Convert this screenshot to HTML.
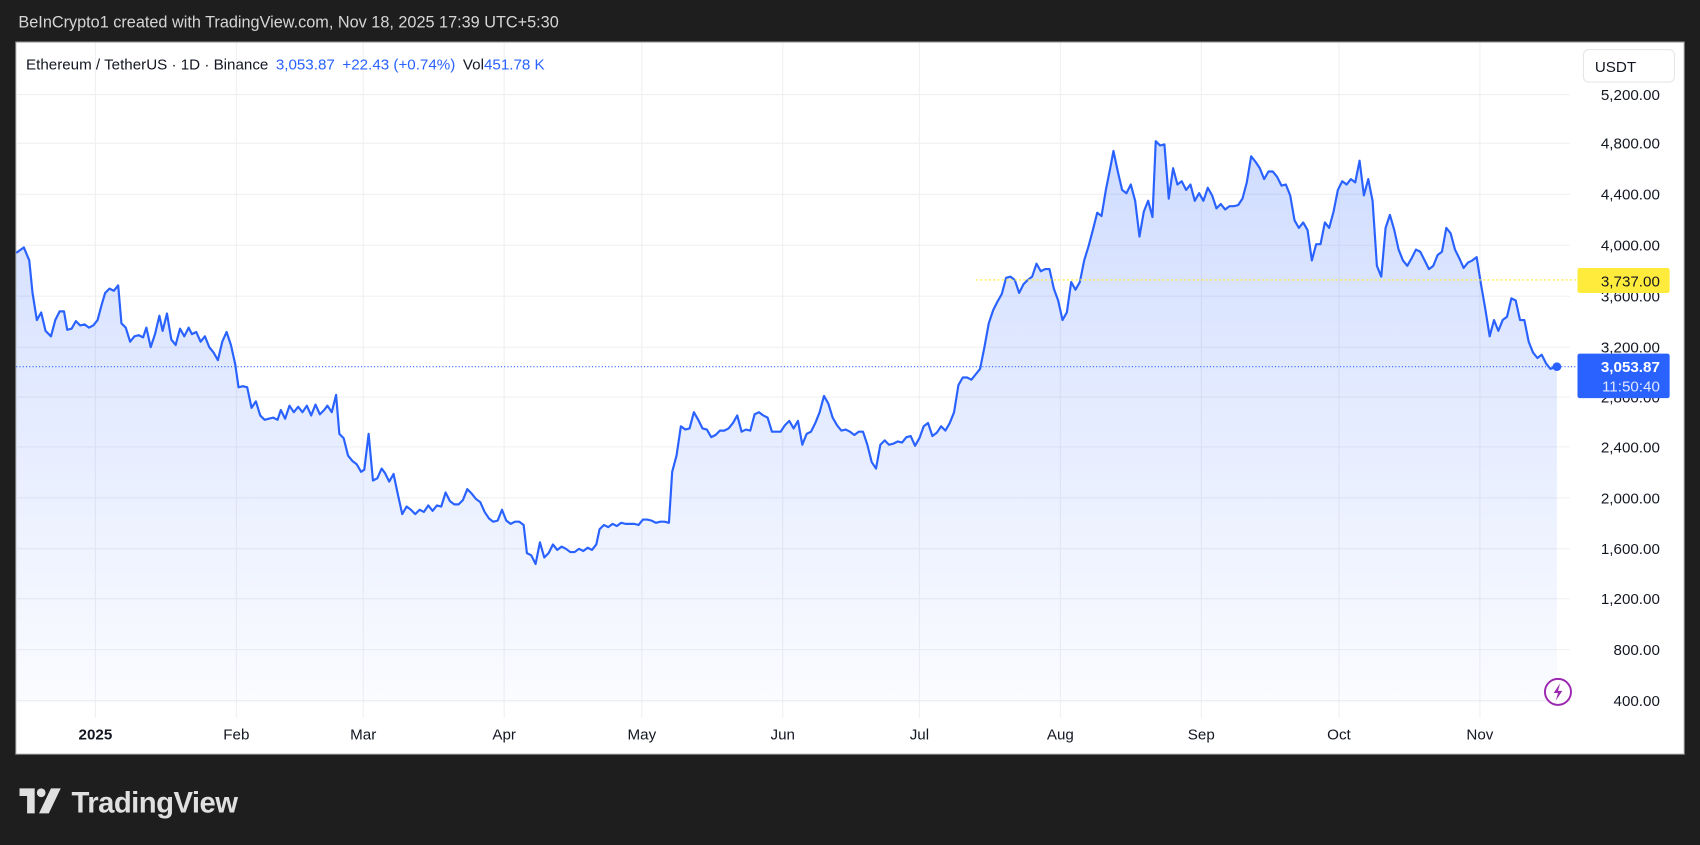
<!DOCTYPE html>
<html><head><meta charset="utf-8"><style>
html,body{margin:0;padding:0;background:#1e1e1e;}
svg{display:block}
</style></head><body>
<svg width="1700" height="845" viewBox="0 0 1568 779" xmlns="http://www.w3.org/2000/svg" font-family="'Liberation Sans', sans-serif">
<defs>
<linearGradient id="g" x1="0" y1="0" x2="0" y2="1">
<stop offset="0" stop-color="#2962ff" stop-opacity="0.22"/>
<stop offset="1" stop-color="#2962ff" stop-opacity="0.02"/>
</linearGradient>
</defs>
<rect width="1568" height="779" fill="#1e1e1e"/>
<text x="17" y="25" font-size="15" fill="#d6d6d6">BeInCrypto1 created with TradingView.com, Nov 18, 2025 17:39 UTC+5:30</text>
<rect x="14.5" y="38.5" width="1539" height="657" fill="#fff" stroke="#888" stroke-width="1"/>
<g stroke="#f0f0f3" stroke-width="1">
<line x1="15" x2="1448" y1="87" y2="87"/><line x1="15" x2="1448" y1="132" y2="132"/><line x1="15" x2="1448" y1="179" y2="179"/><line x1="15" x2="1448" y1="226" y2="226"/><line x1="15" x2="1448" y1="273" y2="273"/><line x1="15" x2="1448" y1="320" y2="320"/><line x1="15" x2="1448" y1="366" y2="366"/><line x1="15" x2="1448" y1="412" y2="412"/><line x1="15" x2="1448" y1="459" y2="459"/><line x1="15" x2="1448" y1="506" y2="506"/><line x1="15" x2="1448" y1="552" y2="552"/><line x1="15" x2="1448" y1="599" y2="599"/><line x1="15" x2="1448" y1="646" y2="646"/>
<line x1="88" x2="88" y1="39" y2="662"/><line x1="218" x2="218" y1="39" y2="662"/><line x1="335" x2="335" y1="39" y2="662"/><line x1="465" x2="465" y1="39" y2="662"/><line x1="592" x2="592" y1="39" y2="662"/><line x1="722" x2="722" y1="39" y2="662"/><line x1="848" x2="848" y1="39" y2="662"/><line x1="978" x2="978" y1="39" y2="662"/><line x1="1108" x2="1108" y1="39" y2="662"/><line x1="1235" x2="1235" y1="39" y2="662"/><line x1="1365" x2="1365" y1="39" y2="662"/>
</g>
<polygon fill="url(#g)" points="15,648 15,233 22,228 27,240 30,270 34,295 38,288 42,305 47,310 51,295 55,287 59,287 62,304 66,303 70,296 74,300 78,299 82,302 86,300 90,295 94,280 97,270 101,266 105,268 109,263 112,298 116,302 120,315 124,310 128,309 132,311 135,302 139,320 143,308 147,291 150,305 154,289 158,313 162,318 166,303 170,310 174,302 177,308 181,306 185,315 189,310 193,320 197,325 201,332 205,315 209,306 213,318 217,336 220,357 224,356 228,357 232,376 236,370 240,383 244,387 248,386 252,385 256,387 259,378 263,386 267,374 271,380 275,375 279,380 283,374 287,383 291,373 295,382 299,378 302,374 306,380 310,364 313,400 317,404 321,420 325,425 329,428 333,435 336,433 340,400 344,443 348,441 352,432 355,436 359,444 363,437 367,456 371,474 375,467 379,470 383,474 387,470 391,472 395,466 399,471 403,466 407,467 411,454 415,462 419,465 423,465 427,461 431,451 435,455 439,460 443,463 447,472 451,478 455,481 459,480 463,470 467,480 471,483 475,481 479,481 483,484 486,510 490,512 494,520 498,500 502,514 506,510 510,502 514,507 518,504 522,506 526,509 530,509 534,506 538,508 542,505 546,507 550,502 553,488 557,484 561,486 565,483 569,485 573,482 577,483 581,483 585,483 589,484 593,479 597,479 601,480 605,482 609,481 613,481 617,482 620,435 624,420 628,393 632,396 636,395 640,380 644,387 648,395 652,396 656,403 660,401 664,397 668,397 672,395 676,390 680,383 684,398 688,396 692,397 696,382 700,380 704,383 708,385 712,398 716,398 720,398 724,392 728,388 732,395 736,388 740,410 744,400 748,398 752,390 756,380 760,365 764,372 768,385 772,392 776,397 780,396 784,398 788,401 792,398 796,398 800,410 804,426 808,432 812,410 816,406 820,410 824,409 828,407 832,408 836,403 840,402 844,411 848,404 852,393 856,390 860,402 864,399 868,393 872,397 876,390 880,380 884,355 888,348 892,348 896,350 900,345 904,340 908,320 912,298 916,286 920,278 924,271 928,256 932,255 936,258 940,270 944,262 948,258 952,255 956,243 960,250 964,248 968,248 972,266 976,277 980,295 984,288 988,260 992,267 996,260 1000,240 1004,227 1008,212 1012,196 1016,199 1020,175 1024,155 1027,139 1031,158 1035,175 1039,178 1043,170 1047,185 1051,218 1055,195 1059,185 1063,200 1066,130 1070,134 1074,133 1078,183 1082,155 1086,170 1090,167 1094,175 1098,170 1102,185 1106,178 1110,185 1114,173 1118,180 1122,192 1126,188 1130,193 1134,190 1138,190 1142,189 1146,183 1150,168 1154,144 1158,149 1162,155 1166,165 1170,158 1174,158 1178,163 1182,171 1186,170 1190,180 1194,203 1198,210 1202,205 1206,212 1210,240 1214,225 1218,225 1222,205 1226,210 1230,195 1234,175 1238,167 1242,170 1246,165 1250,168 1254,148 1258,180 1262,165 1266,185 1270,245 1274,255 1278,210 1282,198 1286,212 1290,230 1294,240 1298,245 1302,238 1306,230 1310,232 1314,240 1318,248 1322,245 1326,235 1330,232 1334,210 1338,215 1342,230 1346,238 1350,247 1354,242 1358,240 1362,237 1366,262 1370,285 1374,310 1378,295 1382,305 1386,295 1390,292 1394,275 1398,277 1402,295 1406,295 1410,315 1414,325 1418,330 1422,327 1426,335 1430,340 1436,338 1436,648"/>
<polyline fill="none" stroke="#2962ff" stroke-width="2" stroke-linejoin="round" points="15,233 22,228 27,240 30,270 34,295 38,288 42,305 47,310 51,295 55,287 59,287 62,304 66,303 70,296 74,300 78,299 82,302 86,300 90,295 94,280 97,270 101,266 105,268 109,263 112,298 116,302 120,315 124,310 128,309 132,311 135,302 139,320 143,308 147,291 150,305 154,289 158,313 162,318 166,303 170,310 174,302 177,308 181,306 185,315 189,310 193,320 197,325 201,332 205,315 209,306 213,318 217,336 220,357 224,356 228,357 232,376 236,370 240,383 244,387 248,386 252,385 256,387 259,378 263,386 267,374 271,380 275,375 279,380 283,374 287,383 291,373 295,382 299,378 302,374 306,380 310,364 313,400 317,404 321,420 325,425 329,428 333,435 336,433 340,400 344,443 348,441 352,432 355,436 359,444 363,437 367,456 371,474 375,467 379,470 383,474 387,470 391,472 395,466 399,471 403,466 407,467 411,454 415,462 419,465 423,465 427,461 431,451 435,455 439,460 443,463 447,472 451,478 455,481 459,480 463,470 467,480 471,483 475,481 479,481 483,484 486,510 490,512 494,520 498,500 502,514 506,510 510,502 514,507 518,504 522,506 526,509 530,509 534,506 538,508 542,505 546,507 550,502 553,488 557,484 561,486 565,483 569,485 573,482 577,483 581,483 585,483 589,484 593,479 597,479 601,480 605,482 609,481 613,481 617,482 620,435 624,420 628,393 632,396 636,395 640,380 644,387 648,395 652,396 656,403 660,401 664,397 668,397 672,395 676,390 680,383 684,398 688,396 692,397 696,382 700,380 704,383 708,385 712,398 716,398 720,398 724,392 728,388 732,395 736,388 740,410 744,400 748,398 752,390 756,380 760,365 764,372 768,385 772,392 776,397 780,396 784,398 788,401 792,398 796,398 800,410 804,426 808,432 812,410 816,406 820,410 824,409 828,407 832,408 836,403 840,402 844,411 848,404 852,393 856,390 860,402 864,399 868,393 872,397 876,390 880,380 884,355 888,348 892,348 896,350 900,345 904,340 908,320 912,298 916,286 920,278 924,271 928,256 932,255 936,258 940,270 944,262 948,258 952,255 956,243 960,250 964,248 968,248 972,266 976,277 980,295 984,288 988,260 992,267 996,260 1000,240 1004,227 1008,212 1012,196 1016,199 1020,175 1024,155 1027,139 1031,158 1035,175 1039,178 1043,170 1047,185 1051,218 1055,195 1059,185 1063,200 1066,130 1070,134 1074,133 1078,183 1082,155 1086,170 1090,167 1094,175 1098,170 1102,185 1106,178 1110,185 1114,173 1118,180 1122,192 1126,188 1130,193 1134,190 1138,190 1142,189 1146,183 1150,168 1154,144 1158,149 1162,155 1166,165 1170,158 1174,158 1178,163 1182,171 1186,170 1190,180 1194,203 1198,210 1202,205 1206,212 1210,240 1214,225 1218,225 1222,205 1226,210 1230,195 1234,175 1238,167 1242,170 1246,165 1250,168 1254,148 1258,180 1262,165 1266,185 1270,245 1274,255 1278,210 1282,198 1286,212 1290,230 1294,240 1298,245 1302,238 1306,230 1310,232 1314,240 1318,248 1322,245 1326,235 1330,232 1334,210 1338,215 1342,230 1346,238 1350,247 1354,242 1358,240 1362,237 1366,262 1370,285 1374,310 1378,295 1382,305 1386,295 1390,292 1394,275 1398,277 1402,295 1406,295 1410,315 1414,325 1418,330 1422,327 1426,335 1430,340 1436,338"/>
<line x1="15" x2="1455" y1="338" y2="338" stroke="#2962ff" stroke-width="1" stroke-dasharray="1,2"/>
<line x1="900" x2="1455" y1="258" y2="258" stroke="#ffeb3b" stroke-width="1" stroke-dasharray="2,2"/>
<circle cx="1436" cy="338" r="4" fill="#2962ff"/>
<g font-size="14" fill="#131722" text-anchor="end">
<text x="1531" y="92">5,200.00</text><text x="1531" y="137">4,800.00</text><text x="1531" y="184">4,400.00</text><text x="1531" y="231">4,000.00</text><text x="1531" y="278">3,600.00</text><text x="1531" y="325">3,200.00</text><text x="1531" y="371">2,800.00</text><text x="1531" y="417">2,400.00</text><text x="1531" y="464">2,000.00</text><text x="1531" y="511">1,600.00</text><text x="1531" y="557">1,200.00</text><text x="1531" y="604">800.00</text><text x="1531" y="651">400.00</text>
</g>
<rect x="1455" y="247" width="85" height="23" rx="2" fill="#ffeb3b"/>
<text x="1531" y="264" font-size="14" fill="#131722" text-anchor="end">3,737.00</text>
<rect x="1455" y="326" width="85" height="41" rx="2" fill="#2962ff"/>
<text x="1531" y="343" font-size="14" fill="#fff" text-anchor="end" font-weight="bold">3,053.87</text>
<text x="1531" y="361" font-size="14" fill="#dfe6ff" text-anchor="end">11:50:40</text>
<rect x="1460.5" y="45.5" width="84" height="30" rx="5" fill="#fff" stroke="#e6e6ea"/>
<text x="1471" y="66" font-size="14" fill="#131722">USDT</text>
<text x="24" y="64" font-size="14" fill="#131722">Ethereum / TetherUS · 1D · Binance <tspan fill="#2962ff" dx="3">3,053.87</tspan><tspan fill="#2962ff" dx="7">+22.43 (+0.74%)</tspan><tspan dx="7">Vol</tspan><tspan fill="#2962ff">451.78 K</tspan></text>
<g font-size="14" fill="#131722" text-anchor="middle">
<text x="88" y="682" font-weight="bold">2025</text><text x="218" y="682">Feb</text><text x="335" y="682">Mar</text><text x="465" y="682">Apr</text><text x="592" y="682">May</text><text x="722" y="682">Jun</text><text x="848" y="682">Jul</text><text x="978" y="682">Aug</text><text x="1108" y="682">Sep</text><text x="1235" y="682">Oct</text><text x="1365" y="682">Nov</text>
</g>
<circle cx="1437" cy="638" r="12" fill="#fff" stroke="#9c27b0" stroke-width="1.8"/>
<path d="M1439,630 L1433,639 L1437,639 L1435,646 L1441,637 L1437,637 Z" fill="#9c27b0"/>
<g fill="#e0e0e0">
<path d="M18,727 H32 V750 H25 V734 H18 Z"/>
<circle cx="38" cy="731" r="4"/>
<path d="M47,727 H56 L45,750 H36 Z"/>
<text x="66" y="749" font-size="27" font-weight="bold" letter-spacing="-0.5">TradingView</text>
</g>
</svg>
</body></html>
